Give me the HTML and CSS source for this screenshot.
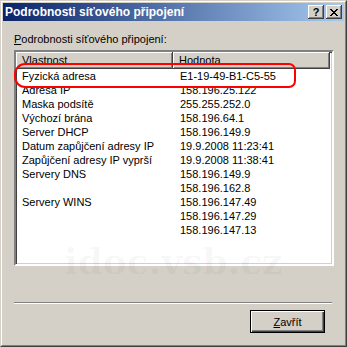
FILE: index.html
```html
<!DOCTYPE HTML>
<html>

<head>
    <title>Podrobnosti síťového připojení</title>
    <meta name="viewport" content="width=device-width, initial-scale=1">
    <link rel="stylesheet" href="styles.css">
</head>

<body>
    <div class="window">
        <div class="frame">
            <!-- Title bar -->
            <div class="caption">
                <span class="caption-text">Podrobnosti síťového připojení</span>
                <div class="caption-buttons">
                    <button class="cap-btn">?</button>
                    <button class="cap-btn cap-close">
                        <svg width="8" height="7" viewBox="0 0 8 7">
                            <path d="M0 0h2v1h-2z M6 0h2v1h-2z M1 1h2v1h-2z M5 1h2v1h-2z M2 2h4v1h-4z M3 3h2v1h-2z M2 4h4v1h-4z M1 5h2v1h-2z M5 5h2v1h-2z M0 6h2v1h-2z M6 6h2v1h-2z" fill="#000"/>
                        </svg>
                    </button>
                </div>
            </div>

            <div class="content">
                <p class="label"><u>P</u>odrobnosti síťového připojení:</p>

                <div class="listbox">
                    <div class="list-header">
                        <div class="col-head">Vlastnost</div>
                        <div class="col-head">Hodnota</div>
                    </div>
                    <div class="rows">
                        <span>Fyzická adresa</span><span>E1-19-49-B1-C5-55</span>
                        <span>Adresa IP</span><span>158.196.25.122</span>
                        <span>Maska podsítě</span><span>255.255.252.0</span>
                        <span>Výchozí brána</span><span>158.196.64.1</span>
                        <span>Server DHCP</span><span>158.196.149.9</span>
                        <span>Datum zapůjčení adresy IP</span><span>19.9.2008 11:23:41</span>
                        <span>Zapůjčení adresy IP vyprší</span><span>19.9.2008 11:38:41</span>
                        <span>Servery DNS</span><span>158.196.149.9</span>
                        <span></span><span>158.196.162.8</span>
                        <span>Servery WINS</span><span>158.196.147.49</span>
                        <span></span><span>158.196.147.29</span>
                        <span></span><span>158.196.147.13</span>
                    </div>
                </div>

                <div class="separator"></div>

                <div class="footer">
                    <button class="button"><u>Z</u>avřít</button>
                </div>
            </div>

            <!-- red highlight drawn over the list -->
            <div class="highlight"></div>
            <div class="watermark">idoc.vsb.cz</div>
        </div>
    </div>
</body>

</html>
```

FILE: styles.css
```css
html {
    font-family: "Liberation Sans", Arial, sans-serif;
    font-size: 11px;
}

body {
    margin: 0;
}

.window {
    width: 347px;
    height: 347px;
    box-sizing: border-box;
    background-color: #D4D0C8;
    border: 1px solid;
    border-color: #D4D0C8 #404040 #404040 #D4D0C8;
}

.frame {
    position: relative;
    height: 100%;
    box-sizing: border-box;
    border: 1px solid;
    border-color: #FFFFFF #808080 #808080 #FFFFFF;
    padding: 1px;
    overflow: hidden;
}

.caption {
    height: 18px;
    display: flex;
    align-items: center;
    justify-content: space-between;
    background: linear-gradient(to right, #0A246A, #A6CAF0);
    color: #fff;
}

.caption-text {
    font-weight: bold;
    font-size: 12px;
    padding-left: 2px;
    line-height: 14px;
}

.caption-buttons {
    display: flex;
    gap: 2px;
    padding-right: 2px;
}

.cap-btn {
    width: 16px;
    height: 14px;
    padding: 0;
    margin: 0;
    display: flex;
    align-items: center;
    justify-content: center;
    font-family: "Liberation Sans", Arial, sans-serif;
    font-weight: bold;
    font-size: 11px;
    line-height: 11px;
    color: #000;
    background-color: #D4D0C8;
    border: none;
    box-shadow: inset -1px -1px #404040, inset 1px 1px #FFFFFF, inset -2px -2px #808080;
}

.content {
    padding: 12px 11px 0 11px;
}

.label {
    margin: 0;
    line-height: 13px;
    color: #000;
}

.listbox {
    margin-top: 4px;
    width: 320px;
    height: 216px;
    box-sizing: border-box;
    background-color: #fff;
    border: 2px solid;
    border-color: #808080 #FFFFFF #FFFFFF #808080;
    box-shadow: inset 1px 1px #404040, inset -1px -1px #D4D0C8;
    padding: 0 2px 0 0;
}

.list-header {
    display: grid;
    grid-template-columns: 157px 1fr;
    height: 17px;
}

.col-head {
    background-color: #D4D0C8;
    padding-left: 6px;
    line-height: 16px;
    color: #000;
    box-shadow: inset -1px -1px #404040, inset 1px 1px #FFFFFF, inset -2px -2px #808080;
}

.rows {
    display: grid;
    grid-template-columns: 157px 1fr;
    grid-auto-rows: 14px;
    line-height: 14px;
    color: #000;
}

.rows span {
    padding-left: 6px;
    white-space: nowrap;
}

.rows span:nth-child(2n) {
    padding-left: 7px;
}

.separator {
    margin-top: 36px;
    width: 318px;
    height: 1px;
    background-color: #808080;
    border-bottom: 1px solid #FFFFFF;
}

.footer {
    display: flex;
    justify-content: flex-end;
    padding-top: 6px;
    padding-right: 8px;
}

.button {
    width: 75px;
    height: 23px;
    padding: 0;
    font-family: "Liberation Sans", Arial, sans-serif;
    font-size: 11px;
    color: #000;
    background-color: #D4D0C8;
    border: 1px solid #000;
    box-shadow: inset 1px 1px #FFFFFF, inset -1px -1px #404040, inset -2px -2px #808080;
}

.highlight {
    position: absolute;
    left: 12px;
    top: 61px;
    width: 278px;
    height: 21px;
    border: 2px solid #FF0000;
    border-radius: 11px 7px 7px 11px;
}

.watermark {
    position: absolute;
    left: 62px;
    top: 247px;
    line-height: 24px;
    font-family: "DejaVu Serif", serif;
    font-weight: bold;
    font-size: 36px;
    color: rgba(0, 0, 0, 0.035);
    pointer-events: none;
}
```
